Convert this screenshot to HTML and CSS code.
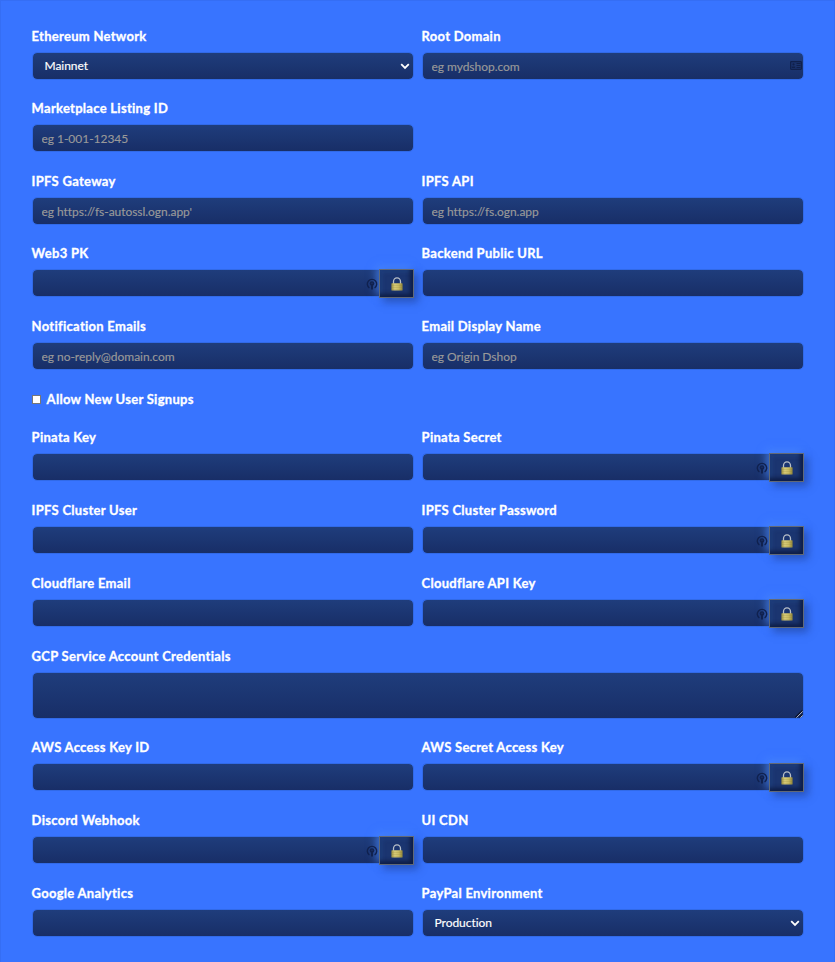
FILE: index.html
```html
<!DOCTYPE html>
<html lang="en">
<head>
<meta charset="utf-8">
<title>Settings</title>
<link rel="stylesheet" href="styles.css">
</head>
<body>
<svg width="0" height="0" class="defs" aria-hidden="true">
  <defs>
    <linearGradient id="brass" x1="0" x2="1" y1="0" y2="0"><stop offset="0" stop-color="#9c9040"/><stop offset=".3" stop-color="#d8cc78"/><stop offset=".65" stop-color="#c9bb62"/><stop offset="1" stop-color="#91853a"/></linearGradient>
    <symbol id="lock" viewBox="0 0 12 14"><path d="M2.500 7V4.600a3.500 3.700 0 0 1 7 0V7" fill="none" stroke="#b9c0c8" stroke-width="1.300"/><rect x=".4" y="6.200" width="11.200" height="7.300" rx=".6" fill="url(#brass)"/><path d="M1 8.500h10M1 10.500h10M1 12.500h10" stroke="#857a36" stroke-opacity=".35" stroke-width=".5"/></symbol>
    <symbol id="key" viewBox="0 0 12 12"><path d="M3.400 10A4.700 4.700 0 1 1 8.600 10" fill="none" stroke="#10214f" stroke-width="1.400"/><circle cx="6" cy="5.500" r="2.300" fill="#10214f"/><circle cx="6" cy="5.300" r=".7" fill="#1b3570"/><path d="M6 6.500v5" stroke="#10214f" stroke-width="2"/></symbol>
  </defs>
</svg>
<form class="panel">
  <div class="field"><label>Ethereum Network</label><div class="select"><span>Mainnet</span><svg class="chevron" viewBox="0 0 10 7"><path d="M1.2 1.2 5 5l3.8-3.8"/></svg></div></div>
  <div class="field"><label>Root Domain</label><div class="box"><input placeholder="eg mydshop.com"><svg class="card" viewBox="0 0 12 9"><rect x=".6" y=".6" width="10.8" height="7.8" rx=".8" fill="#1a326b" stroke="#10204b" stroke-width="1.2"/><circle cx="3.5" cy="3.4" r="1.1"/><path d="M1.8 7V5.5h3.4V7zM6.5 2h4v1h-4zm0 2h4v1h-4zm0 2h4v1h-4z"/></svg></div></div>
  <div class="field half"><label>Marketplace Listing ID</label><input placeholder="eg 1-001-12345"></div>
  <div class="field"><label>IPFS Gateway</label><input placeholder="eg https://fs-autossl.ogn.app'"></div>
  <div class="field"><label>IPFS API</label><input placeholder="eg https://fs.ogn.app"></div>
  <div class="field"><label>Web3 PK</label><div class="box secret"><input><svg class="key"><use href="#key"/></svg><button type="button"><svg><use href="#lock"/></svg></button></div></div>
  <div class="field"><label>Backend Public URL</label><input></div>
  <div class="field"><label>Notification Emails</label><input placeholder="eg no-reply@domain.com"></div>
  <div class="field"><label>Email Display Name</label><input placeholder="eg Origin Dshop"></div>
  <label class="check"><span class="tick"></span>Allow New User Signups</label>
  <div class="field"><label>Pinata Key</label><input></div>
  <div class="field"><label>Pinata Secret</label><div class="box secret"><input><svg class="key"><use href="#key"/></svg><button type="button"><svg><use href="#lock"/></svg></button></div></div>
  <div class="field"><label>IPFS Cluster User</label><input></div>
  <div class="field"><label>IPFS Cluster Password</label><div class="box secret"><input><svg class="key"><use href="#key"/></svg><button type="button"><svg><use href="#lock"/></svg></button></div></div>
  <div class="field"><label>Cloudflare Email</label><input></div>
  <div class="field"><label>Cloudflare API Key</label><div class="box secret"><input><svg class="key"><use href="#key"/></svg><button type="button"><svg><use href="#lock"/></svg></button></div></div>
  <div class="field wide"><label>GCP Service Account Credentials</label><div class="box"><textarea></textarea><svg class="grip" viewBox="0 0 8 8"><path d="M.5 7.500l7-7M4.500 7.500l3-3" stroke="#0b132b" stroke-width="1.600"/><path d="M1.300 7.700l6.400-6.400M5.300 7.700l2.400-2.400" stroke="#d5d8df" stroke-width=".8"/></svg></div></div>
  <div class="field"><label>AWS Access Key ID</label><input></div>
  <div class="field"><label>AWS Secret Access Key</label><div class="box secret"><input><svg class="key"><use href="#key"/></svg><button type="button"><svg><use href="#lock"/></svg></button></div></div>
  <div class="field"><label>Discord Webhook</label><div class="box secret"><input><svg class="key"><use href="#key"/></svg><button type="button"><svg><use href="#lock"/></svg></button></div></div>
  <div class="field"><label>UI CDN</label><input></div>
  <div class="field"><label>Google Analytics</label><input></div>
  <div class="field"><label>PayPal Environment</label><div class="select"><span>Production</span><svg class="chevron" viewBox="0 0 10 7"><path d="M1.2 1.2 5 5l3.8-3.8"/></svg></div></div>
</form>
</body>
</html>
```
FILE: styles.css
```css
* { box-sizing: border-box; }
body {
  margin: 0;
  height: 962px;
  overflow: hidden;
  background: #3874ff;
  font-family: Lato, "Liberation Sans", sans-serif;
  font-variant-ligatures: none;
  color: #fff;
}
.defs { position: absolute; }
.panel {
  height: 962px;
  padding: 26px 31px 0 32px;
  display: grid;
  grid-template-columns: 382px 382px;
  grid-template-rows: 72px 73px 72px 73px 73px 38px 73px 73px 73px 91px 73px 73px 73px;
  column-gap: 8px;
  box-shadow: inset 1px 1px 0 #356ef4, inset -1px 0 0 #356ef4;
}
.field { min-width: 0; }
.half, .wide, .check { grid-column: 1 / -1; }
.half input { width: 382px; }
label {
  display: block;
  height: 20px;
  margin-bottom: 6px;
  font-size: 13px;
  font-weight: 700;
  line-height: 20px;
  letter-spacing: .28px;
  -webkit-text-stroke: .3px #fff;
  text-indent: -.4px;
  white-space: nowrap;
}
input, textarea, .select {
  display: block;
  width: 100%;
  height: 28px;
  margin: 0;
  padding: 0 8.5px;
  border: 1px solid #316ae8;
  border-radius: 5px;
  outline: 0;
  background: linear-gradient(#1f3d7c, #182e67);
  background-clip: padding-box;
  color: #fff;
  font: 12px Lato, "Liberation Sans", sans-serif;
  font-variant-ligatures: none;
  letter-spacing: -.04px;
  -webkit-text-stroke: .15px currentColor;
}
textarea { height: 47px; resize: none; }
::placeholder { color: #999; opacity: 1; }
.select {
  display: flex;
  align-items: center;
  justify-content: space-between;
  padding: 0 3px 0 11.5px;
}
.select span { position: relative; top: -.5px; }
.chevron { width: 10px; height: 7px; fill: none; stroke: #fff; stroke-width: 1.8; }
.box { position: relative; }
.card { position: absolute; right: 2px; top: 9px; width: 12px; height: 9px; fill: #10204b; }
.grip { position: absolute; right: 1px; bottom: 1px; width: 8px; height: 8px; }
.secret { display: flex; }
.secret input { flex: 1; min-width: 0; border-radius: 5px 0 0 5px; border-right: 0; }
.key { position: absolute; left: 334px; top: 9px; width: 12px; height: 12px; }
button {
  display: flex;
  align-items: center;
  justify-content: center;
  width: 35px;
  height: 29px;
  margin: 0;
  padding: 0;
  border: 1px solid #626975;
  background: #1b3570;
  box-shadow: 4px 4px 8px rgba(24, 50, 120, .5), -3px -3px 8px rgba(75, 140, 255, .7), inset -3px -3px 4px rgba(10, 22, 57, .8), inset 2px 2px 4px rgba(36, 75, 145, .45);
}
button svg { width: 12px; height: 14px; }
.check { display: flex; align-items: center; height: 20px; margin: 0; }
.tick { width: 9px; height: 9px; margin-right: 6px; border: 1px solid #777; background: #fff; }
```
